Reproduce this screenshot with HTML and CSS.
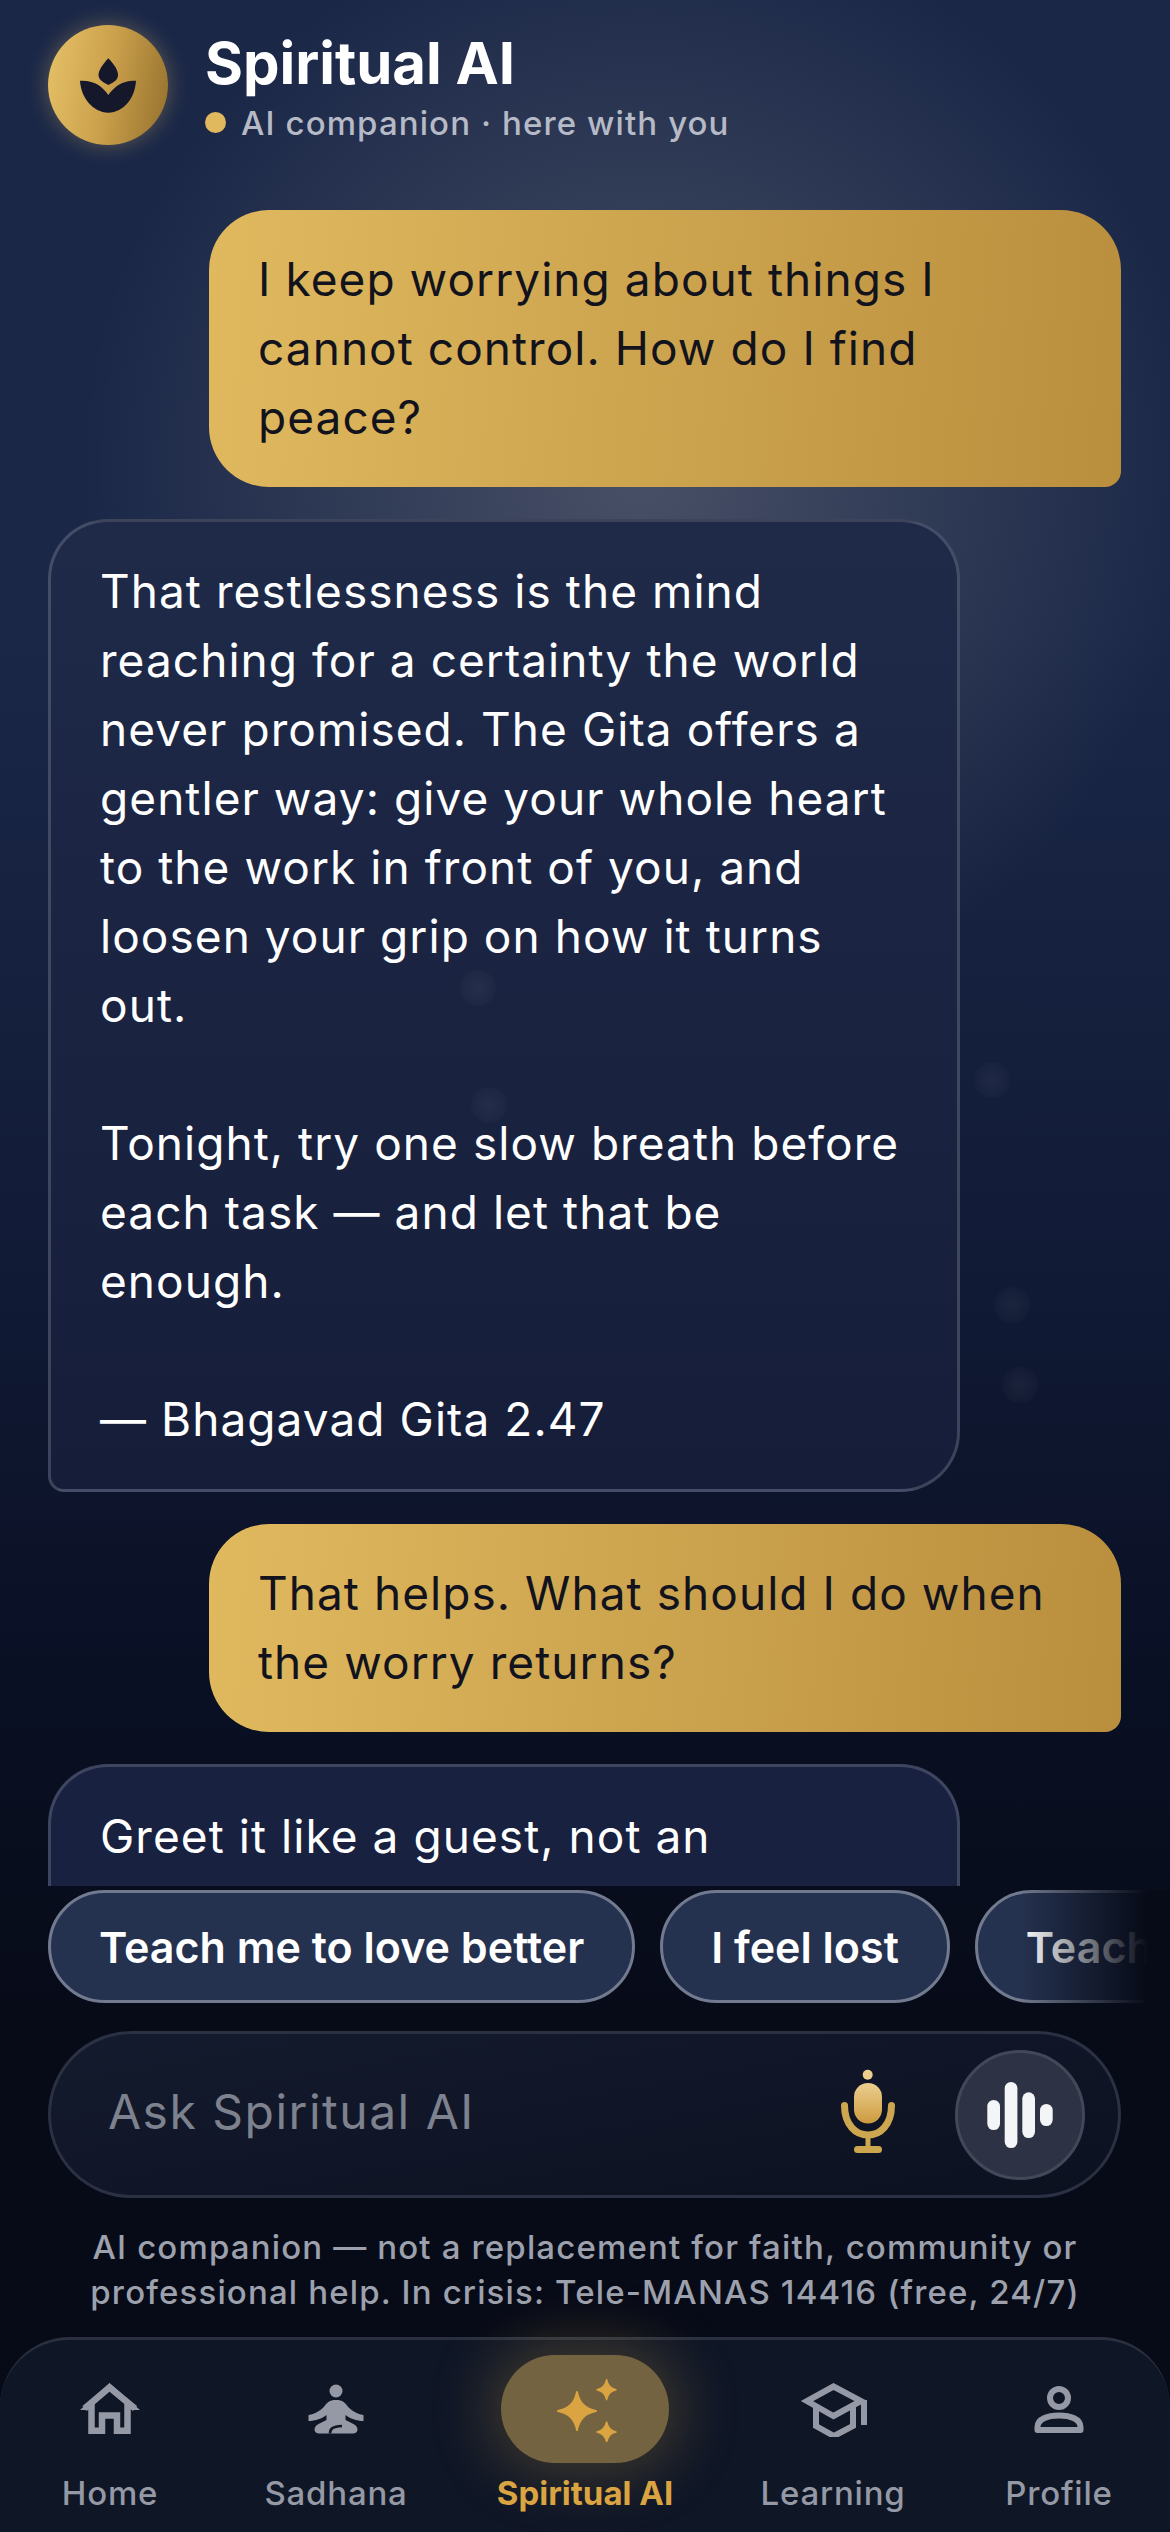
FILE: index.html
```html
<!DOCTYPE html>
<html lang="en">
<head>
    <meta charset="UTF-8">
    <meta name="viewport" content="width=device-width, initial-scale=1.0">
    <title>Spiritual AI</title>
    <link rel="stylesheet" href="styles.css">
</head>
<body>
    <div class="app">
        <span class="mote mote-a"></span>
        <span class="mote mote-b"></span>
        <span class="mote mote-c"></span>
        <span class="mote mote-d"></span>
        <span class="mote mote-e"></span>

        <header class="top">
            <div class="avatar">
                <svg width="66" height="70" viewBox="15 10 66 70">
                    <path fill="#15182a" d="M48.3 18.3C42 25 38.5 31 38.5 35C38.5 39 42 42 48.3 45C55 42 58 39 58 35C58 31 55 25 48.3 18.3Z"/>
                    <path fill="#15182a" d="M20 40.7C35 40 43 47 48.3 55C54 47 62 40 76 40.7C75 58 64 72 48.3 72.7C33 72 21 58 20 40.7Z"/>
                </svg>
            </div>
            <div class="top-text">
                <h1>Spiritual AI</h1>
                <div class="status"><span class="dot"></span>AI companion · here with you</div>
            </div>
        </header>

        <main class="messages">
            <div class="bubble user">
                <p>I keep worrying about things I cannot control. How do I find peace?</p>
            </div>
            <div class="bubble ai">
                <p>That restlessness is the mind reaching for a certainty the world never promised. The Gita offers a gentler way: give your whole heart to the work in front of you, and loosen your grip on how it turns out.</p>
                <p>Tonight, try one slow breath before each task — and let that be enough.</p>
                <p>— Bhagavad Gita 2.47</p>
            </div>
            <div class="bubble user">
                <p>That helps. What should I do when the worry returns?</p>
            </div>
            <div class="bubble ai cut-off">
                <p>Greet it like a guest, not an</p>
            </div>
        </main>

        <div class="chips">
            <button class="chip">Teach me to love better</button>
            <button class="chip">I feel lost</button>
            <button class="chip">Teach me patience</button>
        </div>

        <form class="composer">
            <span class="placeholder">Ask Spiritual AI</span>
            <svg class="mic" width="58" height="90" viewBox="58 45 58 90">
                <defs>
                    <linearGradient id="micFill" x1="0" y1="0" x2="0" y2="1">
                        <stop offset="0" stop-color="#eccf8f"/>
                        <stop offset="1" stop-color="#cc9a3e"/>
                    </linearGradient>
                </defs>
                <circle cx="86.7" cy="53.7" r="5" fill="#eccf8f"/>
                <rect x="73" y="62" width="28" height="40.5" rx="14" fill="url(#micFill)"/>
                <path d="M63.5 84.5C63.5 104 75 114 87 114C99 114 110.5 104 110.5 84.5" fill="none" stroke="#cda650" stroke-width="7" stroke-linecap="round"/>
                <rect x="84.5" y="114" width="5" height="14" fill="#cda650"/>
                <rect x="73" y="125" width="28" height="7" rx="3.5" fill="#cda650"/>
            </svg>
            <button class="voice" type="button">
                <svg width="70" height="70" viewBox="-35 -35 70 70">
                    <rect x="-32.7" y="-15" width="12.7" height="30" rx="6.3" fill="#f3f5f7"/>
                    <rect x="-15.3" y="-33" width="12.7" height="66" rx="6.3" fill="#f3f5f7"/>
                    <rect x="2.3" y="-22.7" width="12.7" height="45.7" rx="6.3" fill="#f3f5f7"/>
                    <rect x="20" y="-11" width="12.7" height="22" rx="6.3" fill="#f3f5f7"/>
                </svg>
            </button>
        </form>

        <p class="disclaimer">AI companion — not a replacement for faith, community or professional help. In crisis: Tele-MANAS 14416 (free, 24/7)</p>

        <nav class="tabs">
            <a class="tab">
                <span class="tab-icon">
                    <svg width="64" height="56" viewBox="9 10 64 56" fill="none" stroke="#9599a5" stroke-width="6.5">
                        <path d="M15.5 37.5L40.5 16.5L66 37.5"/>
                        <path d="M22.5 33V59.7H33V44.5H48V59.7H58.5V33"/>
                        <path d="M11 39L40.5 12L71 39H63L40.5 20L19 39Z" fill="#9599a5" stroke="none"/>
                    </svg>
                </span>
                Home
            </a>
            <a class="tab">
                <span class="tab-icon">
                    <svg width="58" height="52" viewBox="237.5 13 58 52" fill="#9599a5">
                        <circle cx="266.5" cy="21" r="6.5"/>
                        <path d="M266.5 30C261 30 258.5 31.5 255.5 35.5C252 40 246 44 239 45V51C246 51 252.5 48.5 257 45L257 50L250 53.5C246.5 55 245 57.5 245 59.5C245 62 247 63.5 250 63.5H283C286 63.5 288 62 288 59.5C288 57.5 286.5 55 283 53.5L276 50V45C280.5 48.5 287 51 294 51V45C287 44 281 40 277.5 35.5C274.5 31.5 272 30 266.5 30Z"/>
                        <path d="M260.5 63.5C260.5 58.5 263 56.5 272.5 56" fill="none" stroke="#0f1626" stroke-width="2.6"/>
                    </svg>
                </span>
                Sadhana
            </a>
            <a class="tab active">
                <span class="tab-icon pill">
                    <svg width="64" height="66" viewBox="-24 -35 64 66" fill="#d9a441" stroke="#d9a441" stroke-width="2" stroke-linejoin="round">
                        <path d="M0 -19C2 -8 8 -2 19 0C8 2 2 8 0 19C-2 8 -8 2 -19 0C-8 -2 -2 -8 0 -19Z"/>
                        <path d="M29.6 -31.3C30.6 -26 34 -22.3 39 -21.3C34 -20.3 30.6 -17 29.6 -11.3C28.6 -17 25 -20.3 20 -21.3C25 -22.3 28.6 -26 29.6 -31.3Z" stroke-width="1.5"/>
                        <path d="M29.6 11C30.6 16 34 20 39 21C34 22 30.6 26 29.6 31C28.6 26 25 22 20 21C25 20 28.6 16 29.6 11Z" stroke-width="1.5"/>
                    </svg>
                </span>
                Spiritual AI
            </a>
            <a class="tab">
                <span class="tab-icon">
                    <svg width="70" height="56" viewBox="17 10 70 56" fill="none" stroke="#9599a5" stroke-width="6">
                        <path d="M52.5 15.5L26 30L52.5 45L80 30Z"/>
                        <path d="M35 36V55L53 65L72 55V36"/>
                        <path d="M83 29V54"/>
                    </svg>
                </span>
                Learning
            </a>
            <a class="tab">
                <span class="tab-icon">
                    <svg width="56" height="52" viewBox="251.5 13 56 52" fill="none" stroke="#9599a5" stroke-width="6" stroke-linejoin="round">
                        <circle cx="279.5" cy="28" r="9"/>
                        <path d="M258 60V57C258 49 268 45.5 279.5 45.5C291 45.5 301 49 301 57V60Z"/>
                    </svg>
                </span>
                Profile
            </a>
        </nav>
    </div>
</body>
</html>
```

FILE: styles.css
```css
* {
    box-sizing: border-box;
}
html, body {
    margin: 0;
    padding: 0;
}
body {
    font-family: Inter, "Noto Sans", sans-serif;
    color: white;
    background-color: #070b18;
}
.app {
    position: relative;
    display: flex;
    flex-direction: column;
    width: 1170px;
    height: 2532px;
    overflow: hidden;
    background:
        radial-gradient(circle 560px at 640px 470px, rgba(255, 244, 225, 0.2), rgba(255, 244, 225, 0) 100%),
        linear-gradient(180deg, #1a2747 0%, #1a2747 25%, #121c38 48%, #0a1024 66%, #070b18 80%, #070b18 100%);
}
.mote {
    position: absolute;
    z-index: 1;
    width: 36px;
    height: 36px;
    border-radius: 50%;
    background: radial-gradient(circle, rgba(255, 255, 255, 0.05), rgba(255, 255, 255, 0));
}
.mote-a { left: 460px; top: 970px; }
.mote-b { left: 974px; top: 1062px; }
.mote-c { left: 471px; top: 1087px; }
.mote-d { left: 994px; top: 1287px; }
.mote-e { left: 1002px; top: 1367px; }

/* header */
.top {
    position: relative;
    display: flex;
    align-items: center;
    gap: 37px;
    height: 210px;
    padding: 25px 48px 65px;
    flex-shrink: 0;
}
.avatar {
    display: flex;
    align-items: center;
    justify-content: center;
    width: 120px;
    height: 120px;
    border-radius: 50%;
    background: linear-gradient(100deg, #e6c268 0%, #cba04c 50%, #93702c 100%);
    box-shadow: 0 0 22px rgba(226, 190, 105, 0.35);
}
.top-text {
    margin-top: 3px;
}
.top h1 {
    margin: 0;
    font-size: 58px;
    line-height: 66px;
    font-weight: 700;
}
.status {
    display: flex;
    align-items: center;
    gap: 15px;
    margin-top: 6px;
    font-size: 33px;
    font-weight: 500;
    line-height: 42px;
    letter-spacing: 1.1px;
    color: #b6bac6;
}
.dot {
    width: 21px;
    height: 21px;
    border-radius: 50%;
    background-color: #e0b95f;
}

/* chat */
.messages {
    position: relative;
    display: flex;
    flex-direction: column;
    gap: 32px;
    height: 1676px;
    padding: 0 49px 0 48px;
    overflow: hidden;
    flex-shrink: 0;
}
.bubble {
    width: 912px;
    flex-shrink: 0;
    font-size: 46px;
    line-height: 69px;
    letter-spacing: 1.05px;
}
.bubble p {
    margin: 0;
}
.bubble p + p {
    margin-top: 69px;
}
.user {
    align-self: flex-end;
    padding: 35px 48px 35px 49px;
    border-radius: 60px 60px 16px 60px;
    color: #12131c;
    background: linear-gradient(95deg, #e0b95f 0%, #b98e3d 100%);
}
.ai {
    padding: 35px 48px 35px 49px;
    border: 3px solid rgba(255, 255, 255, 0.17);
    border-radius: 60px 60px 60px 16px;
    background: linear-gradient(180deg, #1f2a49, #151d39);
}
/* last reply runs on below the fold of the chat */
.cut-off {
    min-height: 300px;
    background: #18213f;
}

/* suggestion chips */
.chips {
    position: relative;
    display: flex;
    gap: 25px;
    margin-top: 4px;
    padding-left: 48px;
    flex-shrink: 0;
}
.chips::after {
    content: '';
    position: absolute;
    top: 0;
    right: 0;
    bottom: 0;
    width: 150px;
    background: linear-gradient(90deg, rgba(7, 11, 24, 0), #070b18 85%);
}
.chip {
    height: 113px;
    padding: 0 48px;
    flex-shrink: 0;
    border: 3px solid #717a8e;
    border-radius: 57px;
    background-color: #25324f;
    color: white;
    font-family: inherit;
    font-size: 43px;
    font-weight: 600;
}

/* input */
.composer {
    display: flex;
    align-items: center;
    height: 167px;
    margin: 28px 49px 0 48px;
    padding: 0 33px 0 57px;
    flex-shrink: 0;
    border: 3px solid #2b3142;
    border-radius: 84px;
    background: linear-gradient(170deg, #141b2e, #0c1120);
}
.placeholder {
    flex: 1;
    margin-bottom: 6px;
    font-size: 48px;
    letter-spacing: 1.5px;
    color: #7d828e;
}
.mic {
    margin: 0 58px 8px 0;
}
.voice {
    display: flex;
    align-items: center;
    justify-content: center;
    width: 130px;
    height: 130px;
    padding: 0;
    border: 3px solid #424858;
    border-radius: 50%;
    background-color: #2d3344;
}

.disclaimer {
    margin: 27px 70px 0;
    flex-shrink: 0;
    font-size: 33px;
    font-weight: 500;
    line-height: 45px;
    letter-spacing: 1.15px;
    text-align: center;
    color: #9ca1ad;
}

/* bottom tabs */
.tabs {
    position: absolute;
    left: 0;
    right: 0;
    bottom: 0;
    display: grid;
    grid-template-columns: 220px 232px 266px 230px 222px;
    height: 195px;
    border-top: 3px solid #2a3040;
    border-radius: 70px 70px 0 0;
    background-color: #0f1626;
}
.tab {
    display: flex;
    flex-direction: column;
    align-items: center;
    font-size: 33px;
    font-weight: 500;
    line-height: 44px;
    letter-spacing: 0.8px;
    color: #9599a5;
}
.tab-icon {
    display: flex;
    align-items: center;
    justify-content: center;
    width: 168px;
    height: 108px;
    margin: 15px 0 8px;
}
.pill {
    border-radius: 54px;
    background-color: #736340;
    box-shadow: 0 0 60px 12px rgba(212, 168, 75, 0.25);
}
.active {
    font-weight: 700;
    letter-spacing: 0;
    color: #d9a441;
}
```
